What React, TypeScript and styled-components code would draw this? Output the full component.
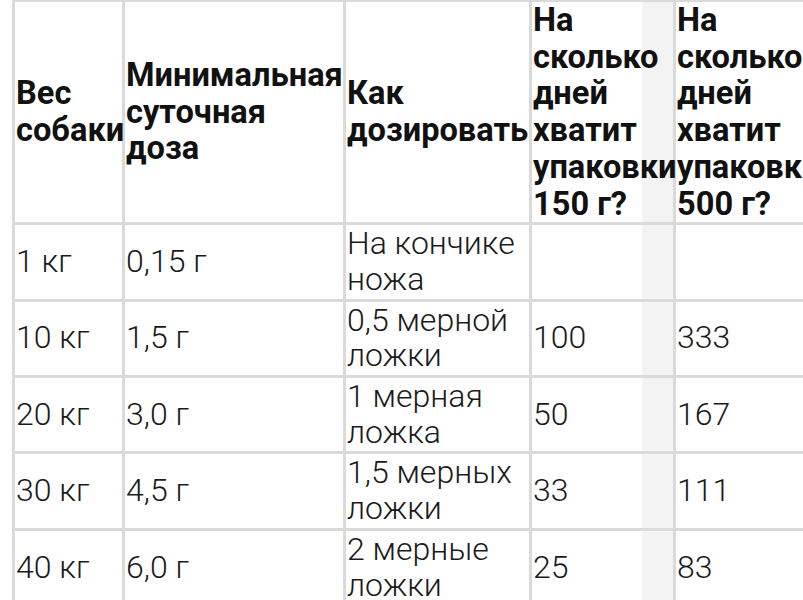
import React from "react";
import styled, { createGlobalStyle } from "styled-components";

const Global = createGlobalStyle`
  html, body { margin: 0; padding: 0; background: #fff; overflow: hidden; }
  body { font-family: Roboto, "Noto Sans", "Liberation Sans", sans-serif; }
`;

const Page = styled.div`
  padding-left: 12px;
  width: 900px;
`;

const Table = styled.table`
  border-collapse: separate;
  border-spacing: 0;
  table-layout: fixed;
  width: 808px;
  border-top: 2px solid #dadada;
  border-left: 3px solid #dadada;
  color: #111;
`;

const Col = styled.col<{ $w: number }>`
  width: ${(p) => p.$w + 3}px;
`;

const shade = "linear-gradient(to right, #fff 110px, #f3f3f3 110px)";

const HeadCell = styled.th<{ $shade?: boolean }>`
  height: 220px;
  padding: 0 0 0 1px;
  border-right: 3px solid #dadada;
  border-bottom: 3px solid #dadada;
  font-size: 32.6px;
  font-weight: 700;
  line-height: 36.7px;
  text-align: left;
  vertical-align: middle;
  overflow: visible;
  white-space: normal;
  background: ${(p) => (p.$shade ? shade : "#fff")};
`;

const Cell = styled.td<{ $shade?: boolean }>`
  padding: 1px 0 1px 1px;
  border-right: 3px solid #dadada;
  border-bottom: 3px solid #dadada;
  font-size: 32px;
  font-weight: 300;
  line-height: 35.7px;
  color: #1a1a1a;
  vertical-align: middle;
  height: 71.4px;
  background: ${(p) => (p.$shade ? shade : "#fff")};
`;

const rows: [string, string, string, string, string][] = [
  ["1 кг", "0,15 г", "На кончике ножа", "", ""],
  ["10 кг", "1,5 г", "0,5 мерной ложки", "100", "333"],
  ["20 кг", "3,0 г", "1 мерная ложка", "50", "167"],
  ["30 кг", "4,5 г", "1,5 мерных ложки", "33", "111"],
  ["40 кг", "6,0 г", "2 мерные ложки", "25", "83"],
];

export default function App() {
  return (
    <Page>
      <Global />
      <Table>
        <colgroup>
          <Col $w={107} />
          <Col $w={218} />
          <Col $w={183} />
          <Col $w={141} />
          <Col $w={141} />
        </colgroup>
        <thead>
          <tr>
            <HeadCell>Вес собаки</HeadCell>
            <HeadCell>Минимальная суточная доза</HeadCell>
            <HeadCell>Как дозировать</HeadCell>
            <HeadCell $shade>На сколько дней хватит упаковки 150 г?</HeadCell>
            <HeadCell>На сколько дней хватит упаковки 500 г?</HeadCell>
          </tr>
        </thead>
        <tbody>
          {rows.map((r, i) => (
            <tr key={i}>
              <Cell>{r[0]}</Cell>
              <Cell>{r[1]}</Cell>
              <Cell>{r[2]}</Cell>
              <Cell $shade>{r[3]}</Cell>
              <Cell>{r[4]}</Cell>
            </tr>
          ))}
        </tbody>
      </Table>
    </Page>
  );
}
